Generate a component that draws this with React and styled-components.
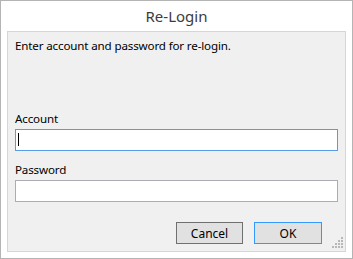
import React from "react";
import styled, { createGlobalStyle } from "styled-components";

const GlobalStyle = createGlobalStyle`
  html, body {
    margin: 0;
    padding: 0;
    background: #ffffff;
  }
  * {
    box-sizing: border-box;
  }
`;

const Window = styled.div`
  width: 353px;
  height: 259px;
  border: 1px solid #b4b4b4;
  background: #ffffff;
  display: flex;
  flex-direction: column;
  font-family: "Noto Sans", "Open Sans", sans-serif;
  color: #000000;
`;

const TitleBar = styled.div`
  height: 30px;
  display: flex;
  align-items: center;
  justify-content: center;
  font-size: 15px;
  color: #3c3c3c;
`;

const Panel = styled.div`
  flex: 1;
  margin: 0 6px 6px;
  background: #f0f0f0;
  border: 1px solid #d6d6d6;
  padding: 6px 7px 0;
  display: flex;
  flex-direction: column;
  position: relative;
`;

const Text = styled.div`
  font-size: 11.6px;
  letter-spacing: -0.15px;
  line-height: 16px;
  height: 16px;
`;

const Message = styled(Text)`
  margin-bottom: 57px;
`;

const Label = styled(Text).attrs({ as: "label" })`
  display: block;
  margin-bottom: 2px;
`;

const Input = styled.input`
  display: block;
  width: 100%;
  height: 22px;
  margin: 0 0 11px;
  padding: 0 3px;
  border: 1px solid ${(p) => (p.$focused ? "#569de5" : "#abadb3")};
  background: #ffffff;
  font-family: inherit;
  font-size: 12px;
  outline: none;
`;

const Caret = styled.span`
  position: absolute;
  left: 3px;
  top: 4px;
  width: 1px;
  height: 13px;
  background: #000000;
`;

const Field = styled.div`
  position: relative;
`;

const Buttons = styled.div`
  display: flex;
  justify-content: flex-end;
  gap: 11px;
  margin-top: 9px;
  padding-right: 16px;
`;

const Button = styled.button`
  width: ${(p) => (p.$primary ? "68px" : "67px")};
  height: 22px;
  padding: 0;
  background: #e1e1e1;
  border: 1px solid ${(p) => (p.$primary ? "#3399ff" : "#707070")};
  font-family: inherit;
  font-size: 12px;
  color: #000000;
`;

const Grip = styled.svg`
  position: absolute;
  right: 1px;
  bottom: 2px;
`;

const SizeGrip = () => {
  const dots = [];
  for (let r = 0; r < 4; r++) {
    for (let c = 3 - r; c < 4; c++) {
      dots.push(<rect key={`${r}-${c}`} x={c * 3} y={r * 3} width="2" height="2" fill="#b8b8b8" />);
    }
  }
  return (
    <Grip width="12" height="12" viewBox="0 0 12 12">
      {dots}
    </Grip>
  );
};

export default function App() {
  return (
    <>
      <GlobalStyle />
      <Window>
        <TitleBar>Re-Login</TitleBar>
        <Panel>
          <Message>Enter account and password for re-login.</Message>
          <Label>Account</Label>
          <Field>
            <Input $focused type="text" />
            <Caret />
          </Field>
          <Label>Password</Label>
          <Input type="password" />
          <Buttons>
            <Button>Cancel</Button>
            <Button $primary>OK</Button>
          </Buttons>
          <SizeGrip />
        </Panel>
      </Window>
    </>
  );
}
